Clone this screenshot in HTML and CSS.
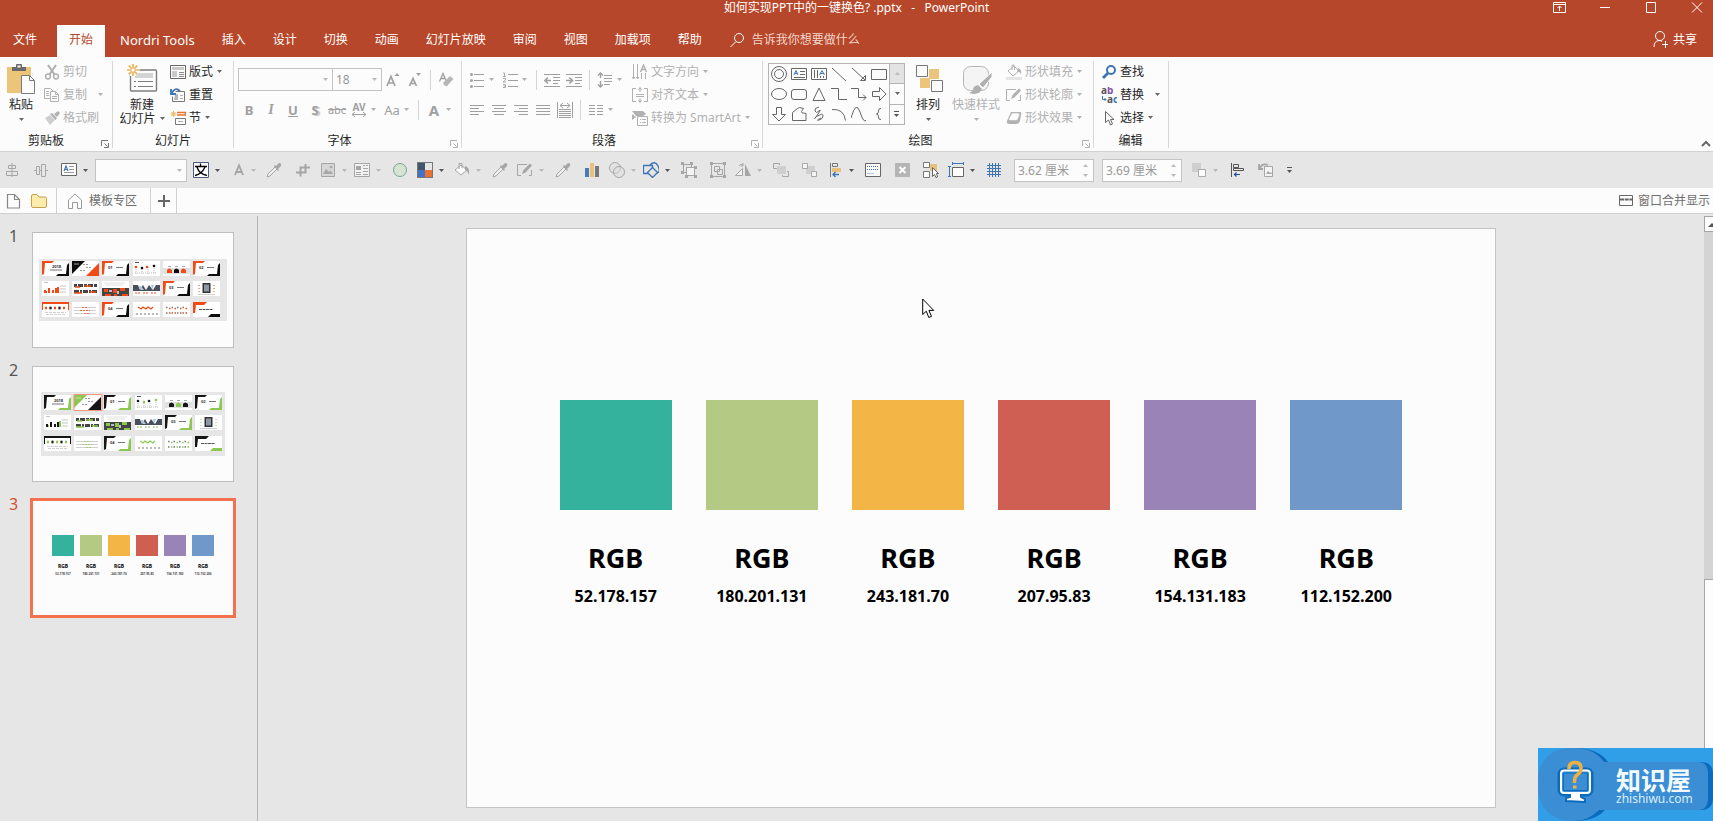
FILE: index.html
```html
<!DOCTYPE html>
<html lang="zh-CN">
<head>
<meta charset="utf-8">
<title>如何实现PPT中的一键换色？.pptx - PowerPoint</title>
<link rel="stylesheet" href="styles.css">
</head>
<body>
<svg class="sprite" aria-hidden="true">
  <symbol id="caret" viewBox="0 0 5 3"><path d="M0 0h5L2.500 3z" fill="currentColor"/></symbol>
  <symbol id="caret-up" viewBox="0 0 5 3"><path d="M0 3h5L2.500 0z" fill="currentColor"/></symbol>
  <symbol id="launch" viewBox="0 0 8 8"><path d="M.5 6V.5H7M3.500 3.500l3 3M7.500 3v4.500H3" fill="none" stroke="currentColor"/></symbol>

  <symbol id="paste" viewBox="0 0 30 32"><path d="M1 4h24v26H1z" fill="#ecc57b"/><path d="M6 8V4h4V2q0-1 1-1h4q1 0 1 1v2h4v4z" fill="#6a6a6a"/><path d="M11.500 2.500h3v2h-3z" fill="#fcfcfc"/><path d="M15.500 12.500h8l5 5v13h-13z" fill="#fcfcfc" stroke="#7a7a7a"/><path d="M23.500 12.500v5h5" fill="none" stroke="#7a7a7a"/></symbol>
  <symbol id="cut" viewBox="0 0 16 16"><g fill="none" stroke="currentColor"><path d="M4 1l6.500 9.500M12 1L5.500 10.500" stroke-width="2.200"/><circle cx="4" cy="12.500" r="2.400" stroke-width="1.500"/><circle cx="12" cy="12.500" r="2.400" stroke-width="1.500"/></g></symbol>
  <symbol id="copy" viewBox="0 0 16 16"><g fill="#fcfcfc" stroke="currentColor"><path d="M.5 1.500h6l3 3v7h-9z"/><path d="M6.500 4.500h5l3 3v7h-8z"/><path d="M11.500 4.500v3h3M2 4.500h3M2 6.500h3M2 8.500h3M8 9.500h5M8 11.500h5" fill="none"/></g></symbol>
  <symbol id="painter" viewBox="0 0 16 16"><path d="M1 8l5-3 5 5-5 5z" fill="currentColor" opacity=".6"/><path d="M6 4l2-1 5 5-1.500 2zM10 4l4-3 2 2-3 4z" fill="currentColor"/></symbol>
  <symbol id="newslide" viewBox="0 0 32 32"><rect x="4.500" y="7" width="26" height="21" rx="1" fill="#fcfcfc" stroke="#7d7d7d" stroke-width="1.400"/><path d="M9 10h18v5H9z" fill="#d4d4d4"/><path d="M8 18.500h2M12 18.500h15M8 23.500h2M12 23.500h15" stroke="#7d7d7d"/><circle cx="7" cy="7" r="6.500" fill="#fcfcfc"/><path d="M7 1v12M1 7h12M2.700 2.700l8.600 8.600M11.300 2.700l-8.600 8.600" stroke="#e9b55c" stroke-width="1.700"/><circle cx="7" cy="7" r="1.700" fill="#fcfcfc"/></symbol>
  <symbol id="layout" viewBox="0 0 16 16"><path d="M.5 1.500h15v13H.5z" fill="#fcfcfc" stroke="#666"/><path d="M2 3h12v3H2zM2 7h5v6H2z" fill="#c9c9c9"/><path d="M9 8.500h5M9 10.500h5M9 12.500h5" stroke="#8b8b8b"/></symbol>
  <symbol id="reset" viewBox="0 0 16 16"><path d="M5.500 4.500H14.500v10H2.500v-5" fill="#fcfcfc" stroke="#777"/><path d="M5 7h3v6H4zM10 8h3v1h-3zM10 11h3v1h-3z" fill="#b6b6b6"/><path d="M10 4Q5-.5 2 6M1 2v5h5" fill="none" stroke="#3e76b5" stroke-width="1.800"/></symbol>
  <symbol id="section" viewBox="0 0 16 16"><path d="M7 2.500h8.500V5H7" fill="none" stroke="#e6762e" stroke-width="1.500"/><path d="M5.500 8.500h10v6h-10z" fill="#fcfcfc" stroke="#777"/><path d="M8 11.500h5" stroke="#aaa"/><path d="M3.500 1v6M.5 4h6M1.500 2l4 4M5.500 2l-4 4" stroke="#e9b55c"/></symbol>

  <symbol id="grow" viewBox="0 0 16 16"><path d="M2 14L6 4.500 10 14M3.500 11h5" fill="none" stroke="currentColor" stroke-width="1.700"/><path d="M9.500 4L12 1l2.500 3z" fill="currentColor"/></symbol>
  <symbol id="shrink" viewBox="0 0 16 16"><path d="M2.500 14L6 6.500 9.500 14M4 11.500h4" fill="none" stroke="currentColor" stroke-width="1.700"/><path d="M9 1h5l-2.500 3z" fill="currentColor"/></symbol>
  <symbol id="eraser" viewBox="0 0 16 16"><path d="M1.500 9.500L5 1.500l3 7M3 6.500h4" fill="none" stroke="currentColor" stroke-width="1.300"/><path d="M5 11l7-7 3.500 3L9 14H7z" fill="currentColor" opacity=".75"/></symbol>
  <symbol id="spacing" viewBox="0 0 16 16"><path d="M1 12.500h14M4 10l-3 2.500L4 15M12 10l3 2.500-3 2.500" fill="none" stroke="currentColor"/><text x="8" y="9" text-anchor="middle" class="glyph">AV</text></symbol>
  <symbol id="bullets" viewBox="0 0 16 16"><path d="M5 2.500h10M5 8.500h10M5 14.500h10" stroke="currentColor" stroke-width="1.200"/><g fill="currentColor"><circle cx="2.500" cy="2.500" r="1.500"/><circle cx="2.500" cy="8.500" r="1.500"/><circle cx="2.500" cy="14.500" r="1.500"/></g></symbol>
  <symbol id="numbers" viewBox="0 0 16 16"><path d="M6 2.500h10M6 8.500h10M6 14.500h10" stroke="currentColor" stroke-width="1.200"/><path d="M1 1h1.500v3.500M1 4.500h3M1 6.500h2.500v1.500L1 10h3M1 12.500h2.500v3H1M1.500 14h2" fill="none" stroke="currentColor" stroke-width=".9"/></symbol>
  <symbol id="outdent" viewBox="0 0 16 16"><path d="M0 2.500h16M9 5.500h7M9 8.500h7M9 11.500h5M0 14.500h16" stroke="currentColor"/><path d="M7 8.500H1.500M4 5.500l-3 3 3 3" fill="none" stroke="currentColor" stroke-width="1.600"/></symbol>
  <symbol id="indent" viewBox="0 0 16 16"><path d="M0 2.500h16M9 5.500h7M9 8.500h7M9 11.500h5M0 14.500h16" stroke="currentColor"/><path d="M0 8.500h5.500M3.500 5.500l3 3-3 3" fill="none" stroke="currentColor" stroke-width="1.600"/></symbol>
  <symbol id="lines" viewBox="0 0 16 16"><path d="M7 3.500h8M7 6.500h8M7 9.500h8M7 12.500h6" stroke="currentColor"/><path d="M3.500 1v5M1 3.500L3.500 1 6 3.500M3.500 9v6M1 12.500L3.500 15 6 12.500" fill="none" stroke="currentColor" stroke-width="1.400"/></symbol>
  <symbol id="al" viewBox="0 0 16 16"><path d="M1 3.500h14M1 6.500h9M1 9.500h14M1 12.500h9" stroke="currentColor"/></symbol>
  <symbol id="ac" viewBox="0 0 16 16"><path d="M1 3.500h14M3 6.500h10M1 9.500h14M3 12.500h10" stroke="currentColor"/></symbol>
  <symbol id="ar" viewBox="0 0 16 16"><path d="M1 3.500h14M6 6.500h9M1 9.500h14M6 12.500h9" stroke="currentColor"/></symbol>
  <symbol id="aj" viewBox="0 0 16 16"><path d="M1 3.500h14M1 6.500h14M1 9.500h14M1 12.500h14" stroke="currentColor"/></symbol>
  <symbol id="ad" viewBox="0 0 16 16"><path d="M.5 0v16M15.500 0v16M2 7.500h12M2 9.500h12M2 11.500h12M2 13.500h12M2 15.500h12M3 3.500h10M6 1L3 3.500 6 6M10 1l3 2.500L10 6" fill="none" stroke="currentColor"/></symbol>
  <symbol id="cols" viewBox="0 0 16 16"><path d="M1 3.500h6M9 3.500h6M1 6.500h6M9 6.500h6M1 9.500h6M9 9.500h6M1 12.500h6M9 12.500h6" stroke="currentColor"/></symbol>
  <symbol id="textdir" viewBox="0 0 16 16"><path d="M1.500 0v15M5.500 0v15M9.500 9v6M13.500 9v6M0 13l1.500 2L3 13M4 13l1.500 2L7 13" fill="none" stroke="currentColor"/><path d="M8.500 8l3-7 3 7M9.500 5.500h4" fill="none" stroke="currentColor" stroke-width="1.500"/></symbol>
  <symbol id="textalign" viewBox="0 0 16 16"><path d="M4 1.500H.5v13H4M12 1.500h3.500v13H12M4 7.500h8M4 9.500h8M8 0v5M6 3l2-2 2 2M8 11v5M6 13l2 2 2-2" fill="none" stroke="currentColor"/></symbol>
  <symbol id="smartart" viewBox="0 0 16 16"><path d="M0 1h11l3 3-3 2H4z M0 4l4 3-4 3z" fill="currentColor"/><path d="M5.500 6.500h10v9h-10z" fill="#fcfcfc" stroke="currentColor"/><path d="M8 9.500h1M10 9.500h4M8 12.500h1M10 12.500h4" stroke="currentColor"/></symbol>

  <symbol id="arrange" viewBox="0 0 32 32"><path d="M17 6h10v10H17zM8 15h10v10H8z" fill="#ecc57b"/><path d="M4.500 2.500h11v11h-11zM19.500 17.500h11v11h-11z" fill="#fcfcfc" stroke="#777"/></symbol>
  <symbol id="styles" viewBox="0 0 32 32"><rect x="3.500" y="3.500" width="25" height="24" rx="7" fill="#f4f4f4" stroke="#b4b4b4"/><path d="M32 9L19 21l4 4 9-11z" fill="#b0b0b0" stroke="#fcfcfc"/><path d="M18 22q-5 1-5 5-2 3-4 3 10 3 13-4z" fill="#b0b0b0"/></symbol>
  <symbol id="fill" viewBox="0 0 16 16"><path d="M0 13h16v3H0z" fill="currentColor" opacity=".3"/><path d="M2 7l6-5 5 5-6 5zM6 6V1.500q2-2 2.500 1V6" fill="none" stroke="currentColor"/><path d="M12 4q4 1 3 7-1-4-4-3z" fill="currentColor"/></symbol>
  <symbol id="outline" viewBox="0 0 16 16"><path d="M10 2.500H.5v11H4M14.500 8v5.500H12" fill="none" stroke="currentColor"/><path d="M5 12l1.500-4L13 1.500 15 3.500 8.500 10.500z" fill="currentColor"/></symbol>
  <symbol id="effect" viewBox="0 0 16 16"><path d="M5 2h9q2 0 1 3l-1 6q-1 3-4 3H4q-4 0-3-3z" fill="currentColor"/><path d="M6 3h6q2 0 1.500 2l-1.500 4q-.5 1.500-2 1.500H4q-2 0-1-2z" fill="#fcfcfc" stroke="currentColor" stroke-width=".6"/></symbol>
  <symbol id="find" viewBox="0 0 16 16"><circle cx="10" cy="6" r="4" fill="none" stroke="#3e76b5" stroke-width="2"/><path d="M7 9l-5 5" stroke="#3e76b5" stroke-width="2.800"/></symbol>
  <symbol id="replace" viewBox="0 0 16 16"><text x="0" y="7" class="glyph dark">a<tspan fill="#8a4eac">b</tspan></text><text x="6" y="16" class="glyph dark">a<tspan fill="#3e76b5">c</tspan></text><path d="M1.500 9v3.500H5M3.500 11L5 12.500 3.500 14" fill="none" stroke="#3e76b5"/></symbol>
  <symbol id="pointer" viewBox="0 0 16 16"><path d="M4.500 1.500v11l3-2.500 2 5 2-1-2-4.500h3.500z" fill="#fcfcfc" stroke="#666"/></symbol>

  <symbol id="s-donut" viewBox="0 0 16 16"><circle cx="8" cy="8" r="7.500"/><circle cx="8" cy="8" r="4.500"/></symbol>
  <symbol id="s-text" viewBox="0 0 16 16"><path d="M.5 2.500h15v11H.5zM9 5.500h5M9 8.500h5M3 11.500h11"/><path d="M3 9l2-4.500L7 9M4 7.500h2" stroke="#3e76b5"/></symbol>
  <symbol id="s-vtext" viewBox="0 0 16 16"><path d="M.5 2.500h15v11H.5zM3.500 4v8M6.500 4v8M9.500 10v2M12.500 10v2"/><path d="M8.500 9L11 4.500 13.500 9M9.500 7.500h3" stroke="#3e76b5"/></symbol>
  <symbol id="s-line" viewBox="0 0 16 16"><path d="M1 2l14 13"/></symbol>
  <symbol id="s-arrow" viewBox="0 0 16 16"><path d="M1 2l13 12M14.500 9.500v5h-5z" /></symbol>
  <symbol id="s-rect" viewBox="0 0 16 16"><path d="M.5 3.500h15v10H.5z"/></symbol>
  <symbol id="s-oval" viewBox="0 0 16 16"><ellipse cx="8" cy="8" rx="7.500" ry="5.500"/></symbol>
  <symbol id="s-round" viewBox="0 0 16 16"><rect x=".5" y="3.500" width="15" height="10" rx="2.500"/></symbol>
  <symbol id="s-tri" viewBox="0 0 16 16"><path d="M8 2l6 12.500H2z"/></symbol>
  <symbol id="s-elbow" viewBox="0 0 16 16"><path d="M0 2.500h7.500v11H16"/></symbol>
  <symbol id="s-elbowa" viewBox="0 0 16 16"><path d="M0 2.500h7.500v9H15M12 8.500l3 3-3 3"/></symbol>
  <symbol id="s-right" viewBox="0 0 16 16"><path d="M1.500 5.500h7v-4l6.500 6.500-6.500 6.500v-4h-7z"/></symbol>
  <symbol id="s-down" viewBox="0 0 16 16"><path d="M5.500 1.500v7h-4L8 15l6.500-6.500h-4v-7z"/></symbol>
  <symbol id="s-free" viewBox="0 0 16 16"><path d="M1.500 14.500v-8l5-4 2-1 4 1-2 3q0 2 2 1.500l2.500.5v7z"/></symbol>
  <symbol id="s-scrib" viewBox="0 0 16 16"><path d="M8 1Q3 2 4 5t4 0-1 3-3 4 5-3q3-2 3 1t-4 4 2-2"/></symbol>
  <symbol id="s-arc" viewBox="0 0 16 16"><path d="M1 3.500q12-1 13.500 11"/></symbol>
  <symbol id="s-curve" viewBox="0 0 16 16"><path d="M0 12Q5-6 9 6t6 8"/></symbol>
  <symbol id="s-brace" viewBox="0 0 16 16"><path d="M10 2.500Q7.500 2 7.500 5T5.500 8q2 0 2 3T10 13.500"/></symbol>

  <symbol id="alignv" viewBox="0 0 16 16"><path d="M8 1v14M4.500 3.500h7v3h-7zM2.500 9.500h11v4h-11z" fill="#e6e6e6" stroke="currentColor"/></symbol>
  <symbol id="alignh" viewBox="0 0 16 16"><path d="M1 8.500h14" stroke="currentColor"/><path d="M3.500 4.500h3v8h-3zM8.500 2.500h4v12h-4z" fill="#e6e6e6" stroke="currentColor"/></symbol>
  <symbol id="textbox" viewBox="0 0 16 16"><path d="M.5 1.500h15v12H.5z" fill="#fcfcfc" stroke="#666"/><path d="M3 9l2-5 2 5M3.500 7.500h3" fill="none" stroke="#3e76b5" stroke-width="1.200"/><path d="M8 4.500h5M8 7.500h5M3 10.500h10" stroke="#999"/></symbol>
  <symbol id="wen" viewBox="0 0 16 16"><path d="M.5.5h15v15H.5z" fill="#fcfcfc" stroke="#4f5a7c"/><path d="M7.500 1.500v3M2 4.500h12M4 5q2 7 10 8.500M12 5Q9 12 2 13.500" fill="none" stroke="#000" stroke-width="1.300"/></symbol>
  <symbol id="fonta" viewBox="0 0 10 16"><path d="M1 13L5 3.500 9 13M2.500 10h5" fill="none" stroke="currentColor" stroke-width="1.900"/></symbol>
  <symbol id="dropper" viewBox="0 0 16 16"><path d="M1 15l1-3 7-7 2 2-7 7z" fill="#eee" stroke="currentColor"/><path d="M8 4l1-1 1 1 3-3q3 0 2 3l-3 3 1 1-1 1z" fill="currentColor"/></symbol>
  <symbol id="crop" viewBox="0 0 16 16"><path d="M1 10.500h9.500V2M5.500 14.500V5.500H15" fill="none" stroke="currentColor" stroke-width="2"/></symbol>
  <symbol id="image" viewBox="0 0 16 16"><path d="M1.500 1.500h13v13h-13z" fill="#d6d6d6" stroke="currentColor"/><path d="M3 12l3-5 3 3 1.500-1.500L13 12z" fill="currentColor"/><circle cx="11" cy="5" r="1.300" fill="currentColor"/></symbol>
  <symbol id="preview" viewBox="0 0 16 16"><path d="M.5 1.500h15v13H.5z" fill="#f2f2f2" stroke="currentColor"/><path d="M2 4h5v4H2z" fill="currentColor"/><path d="M9 3.500h2M12 3.500h2M9 6.500h5M9 9.500h5M2 10.500h5M2 12.500h5M9 12.500h5" stroke="currentColor"/></symbol>
  <symbol id="circle" viewBox="0 0 16 16"><circle cx="8" cy="8" r="6.500" fill="#d5e3d0" stroke="#78a596"/></symbol>
  <symbol id="palette" viewBox="0 0 16 16"><path d="M0 0h16v16H0z" fill="#777"/><path d="M1 1h7v7H1z" fill="#44546a"/><path d="M8 1h7v7H8z" fill="#e7e6e6"/><path d="M1 8h7v7H1z" fill="#4472c4"/><path d="M8 8h7v7H8z" fill="#ed7030"/></symbol>
  <symbol id="bucket" viewBox="0 0 16 16"><path d="M1 8l6-5 6 5-6 5z" fill="#fafafa" stroke="currentColor"/><path d="M5 7V1.500h3V6" fill="none" stroke="currentColor"/><path d="M11 4q5 1 4 9-1-4-4-5z" fill="currentColor"/></symbol>
  <symbol id="chart" viewBox="0 0 16 16"><path d="M1 6h4v9H1z" fill="#4a7bb5"/><path d="M6 1h4v14H6z" fill="#e9c17c"/><path d="M11 4h4v11h-4z" fill="#777"/></symbol>
  <symbol id="venn" viewBox="0 0 16 16"><g fill="#ddd" fill-opacity=".5" stroke="currentColor"><circle cx="6" cy="6" r="5.500"/><circle cx="10" cy="10" r="5.500"/></g></symbol>
  <symbol id="shapes" viewBox="0 0 16 16"><path d="M7 3q5-5 8 1t-1 7M.5 3.500h9v8h-9z" fill="none" stroke="#3e76b5" stroke-width="1.400"/><path d="M9.500 5.500l5 5-5 5-5-5z" fill="#e6e6e6" stroke="#3e76b5" stroke-width="1.400"/></symbol>
  <symbol id="grp" viewBox="0 0 16 16"><path d="M2.500 2.500h8v8h-8z" fill="none" stroke="currentColor"/><path d="M5.500 5.500h8v8h-8z" fill="#f4f4f4" stroke="currentColor"/><path d="M0 0h3v3H0zM9 0h3v3H9zM0 9h3v3H0zM4 13h3v3H4zM13 13h3v3h-3zM13 4h3v3h-3z" fill="currentColor"/></symbol>
  <symbol id="ungrp" viewBox="0 0 16 16"><path d="M1.500 1.500h13v13h-13zM4.500 4.500h5v5h-5zM7.500 7.500h5v5h-5z" fill="none" stroke="currentColor"/><path d="M0 0h3v3H0zM13 0h3v3h-3zM0 13h3v3H0zM13 13h3v3h-3z" fill="currentColor"/></symbol>
  <symbol id="flip" viewBox="0 0 16 16"><path d="M.5 13.500h7v-7z" fill="#f2f2f2" stroke="currentColor"/><path d="M10 14V2l6 12z" fill="currentColor"/><path d="M4 4q2-3 4-1M8 1v3H6" fill="none" stroke="currentColor"/></symbol>
  <symbol id="front" viewBox="0 0 16 16"><path d="M4 4h9v8H4z" fill="#cfcfcf"/><path d="M4 6.500H.5v-5h6V3M14 9.500h1.500v5h-6V13" fill="none" stroke="currentColor"/></symbol>
  <symbol id="back" viewBox="0 0 16 16"><path d="M4 4h9v8H4z" fill="#cfcfcf"/><path d="M.5 1.500h5v5h-5zM9.500 9.500h5v5h-5z" fill="#f4f4f4" stroke="currentColor"/></symbol>
  <symbol id="alleft" viewBox="0 0 16 16"><path d="M3.500 1v14" stroke="#777"/><path d="M5.500 1.500h5v3h-5z" fill="none" stroke="#777"/><path d="M5 6h9v4H5z" fill="#e9c17c"/><path d="M12 12.500H6M8.500 10L6 12.500 8.500 15" fill="none" stroke="#3e76b5" stroke-width="1.400"/></symbol>
  <symbol id="pane" viewBox="0 0 16 16"><path d="M.5 1.500h15v13H.5z" fill="#fcfcfc" stroke="#666"/><path d="M2 4.500h12M2 7.500h12" stroke="#3e76b5" stroke-dasharray="1 1"/><path d="M2 11.500h7" stroke="#b8c9de"/></symbol>
  <symbol id="xbox" viewBox="0 0 16 16"><rect x="1" y="1" width="15" height="14" rx="1" fill="#b5b5b5"/><path d="M5.500 5l6 6M11.500 5l-6 6" stroke="#fcfcfc" stroke-width="2"/></symbol>
  <symbol id="select" viewBox="0 0 16 16"><path d="M7 2h7v7H7z" fill="#e9c17c"/><path d="M.5.5h6v5h-6zM.5 9.500h6v6h-6z" fill="#fcfcfc" stroke="#777"/><path d="M9.500 5.500v9l2-2 1.500 3 1.500-.5-1-3.500h2z" fill="#fcfcfc" stroke="#666"/></symbol>
  <symbol id="size" viewBox="0 0 16 16"><path d="M4.500 5.500h11v9h-11z" fill="#fcfcfc" stroke="#666"/><path d="M4 1.500h12M4.500 0v3M15.500 0v3M1.500 5v10M0 4.500h3M0 14.500h3" stroke="#3e76b5"/></symbol>
  <symbol id="grid" viewBox="0 0 16 16"><path d="M3.500 1v14M6.500 1v14M9.500 1v14M12.500 1v14M1 3.500h14M1 6.500h14M1 9.500h14M1 12.500h14" stroke="#3e76b5"/></symbol>
  <symbol id="overlap" viewBox="0 0 16 16"><path d="M1 1h9v9H1z" fill="#cfcfcf"/><path d="M7.500 7.500h7v7h-7z" fill="#fcfcfc" stroke="#aaa"/></symbol>
  <symbol id="alobj" viewBox="0 0 16 16"><path d="M2.500 1v14M4.500 2.500h5v3h-5zM4.500 6.500h10v2h-10z" fill="none" stroke="#555"/><path d="M11 12.500H5M7.500 10.500l-2 2 2 2" fill="none" stroke="#1d4f9e" stroke-width="1.200"/></symbol>
  <symbol id="rotate" viewBox="0 0 16 16"><path d="M6.500 4.500h8v10h-8z" fill="#f4f4f4" stroke="currentColor"/><path d="M8 12l2-3 2 2 1-1 1 2z" fill="currentColor"/><path d="M2 6q2-5 8-3M1 2v5h4" fill="none" stroke="currentColor" stroke-width="1.800"/></symbol>
  <symbol id="more" viewBox="0 0 6 8"><path d="M0 1.500h5" stroke="#555"/><path d="M0 4h5L2.500 7z" fill="#555"/></symbol>

  <symbol id="m-corner" viewBox="0 0 27 15"><path d="M0 0h27v15H0z" fill="#fff"/><path d="M0 0h12l-2 2H3L2 13l-2 1z" fill="var(--p)"/><path d="M27 2v13H14l2-2h8l1-9z" fill="var(--q)"/></symbol>
  <symbol id="m-tri" viewBox="0 0 27 15"><path d="M0 0h27v15H0z" fill="#fff"/><path d="M0 0h13L0 13z" fill="var(--q)"/><path d="M27 2v13H14z" fill="var(--p)"/><path d="M11 3.500h5M14 6.500h5M8 9.500h6" stroke="#999" stroke-dasharray="2 1"/><path d="M2 3h5" stroke="#fff" stroke-width=".6"/></symbol>
  <symbol id="m-dots" viewBox="0 0 27 15"><path d="M0 0h27v15H0z" fill="#fff"/><path d="M2 1.500h4" stroke="#555"/><path d="M3 6v7M9 8v5M15 6v7M21 5v8M2 12h22" stroke="#bbb" stroke-dasharray="1 1"/><g fill="var(--p)"><circle cx="3" cy="6" r="1.300"/><circle cx="14" cy="6" r="1.300"/></g><g fill="var(--q)"><circle cx="9" cy="7" r="1.300"/><circle cx="21" cy="5" r="1.300"/></g></symbol>
  <symbol id="m-people" viewBox="0 0 27 15"><path d="M0 0h27v15H0z" fill="#fff"/><path d="M0 7h27v6H0z" fill="#e1e1e1"/><path d="M4 12V9q2-3 5 0v3zM18 12V9q2-3 5 0v3z" fill="var(--p)"/><path d="M11 12V9q2-3 5 0v3z" fill="var(--q)"/><path d="M5 5.500h3M12 5.500h3M19 5.500h3" stroke="#aaa"/></symbol>
  <symbol id="m-bars" viewBox="0 0 27 15"><path d="M0 0h27v15H0z" fill="#fff"/><path d="M2 1.500h4M18 5h6M18 8h6M18 11h6" stroke="#aaa" stroke-width=".7"/><path d="M2 12V9h2v3zM6 12V7h2v5zM10 12V9h2v3zM13 12V7h2v5z" fill="var(--p)"/><path d="M4 12v-2h1v2zM15 6h2v6h-2z" fill="var(--r)"/></symbol>
  <symbol id="m-strips" viewBox="0 0 27 15"><path d="M0 0h27v15H0z" fill="#fff"/><path d="M2 4.500h23" stroke="#444" stroke-width="3" stroke-dasharray="3 1 5 1"/><path d="M2 10.500h23" stroke="#444" stroke-width="3" stroke-dasharray="5 1 2 1"/><path d="M3 6h5M12 5h7M2 12h8M18 11h6" stroke="var(--r)" stroke-width="1.300"/></symbol>
  <symbol id="m-city" viewBox="0 0 27 15"><path d="M0 0h27v15H0z" fill="#fff"/><path d="M2 2h21M3 4h18" stroke="#ccc" stroke-width=".6"/><path d="M0 7h27v8H0z" fill="#444"/><path d="M2 8h4v3H2zM11 8h4v4h-4zM18 7h5v3h-5zM3 13h6v2H3zM12 13h3v2h-3zM20 13h6v2h-6z" fill="var(--r)"/><path d="M7 9h3v2H7zM15 10h2v3h-2z" fill="#b9bec4"/></symbol>
  <symbol id="m-photos" viewBox="0 0 27 15"><path d="M0 0h27v15H0z" fill="#fff"/><path d="M0 4h5l2 5 3-5 3 5 3-5 4 5 3-5h4v6H0z" fill="#48505a"/><path d="M5 5h3l3 4H8zM18 4h3l-2 5z" fill="#aac7df"/><path d="M2 12h5M10 12h5M18 12h6" stroke="var(--r)" stroke-dasharray="2 1"/></symbol>
  <symbol id="m-tablet" viewBox="0 0 27 15"><path d="M0 0h27v15H0z" fill="#fff"/><path d="M9.500 2h8v10h-8z" fill="#333"/><path d="M11 3.500h5v7h-5z" fill="#8a98a8"/><path d="M6 4v7M21 4v7" stroke="var(--r)" stroke-dasharray="1 2"/><path d="M5 13.500h17" stroke="#bbb" stroke-width=".7"/></symbol>
  <symbol id="m-banner" viewBox="0 0 27 15"><path d="M0 0h27v15H0z" fill="#fff"/><path d="M0 0h27v8h-1V2H1v6H0z" fill="var(--p)"/><path d="M3 6h21" stroke="var(--r)" stroke-width="2.600" stroke-dasharray="2 2.500"/><path d="M7.500 6h16" stroke="#222" stroke-width="2.600" stroke-dasharray="2 7"/><path d="M3 10.500h21M4 12.500h19" stroke="#bbb" stroke-width=".7" stroke-dasharray="3 1"/></symbol>
  <symbol id="m-list" viewBox="0 0 27 15"><path d="M0 0h27v15H0z" fill="#fff"/><path d="M2 5.500h22M2 8.500h22M2 11.500h22" stroke="#bbb" stroke-width=".7"/><path d="M10 5.500h6M8 8.500h10M12 11.500h5" stroke="var(--r)" stroke-width=".7" stroke-dasharray="2 1"/></symbol>
  <symbol id="m-zig" viewBox="0 0 27 15"><path d="M0 0h27v15H0z" fill="#fff"/><path d="M5 5l3 2 2-2 3 2 2-2 3 2 2-2" fill="none" stroke="var(--r)" stroke-width="1.200"/><path d="M3 12h22" stroke="#bbb" stroke-width="2" stroke-dasharray="2 2"/></symbol>
  <symbol id="m-rows" viewBox="0 0 27 15"><path d="M0 0h27v15H0z" fill="#fff"/><path d="M3 5.500h21M3 11h21" stroke="#777" stroke-width="1.500" stroke-dasharray="1.500 4"/><path d="M6 6.500h19M6 11h19" stroke="var(--r)" stroke-width="1.300" stroke-dasharray="1.500 4"/></symbol>
  <symbol id="m-end" viewBox="0 0 27 15"><path d="M0 0h27v15H0z" fill="#fff"/><path d="M0 0h14l-3 3H3l-1 8H0z" fill="var(--p)"/><path d="M27 12v3H15l3-3z" fill="var(--q)"/><path d="M6 7.500h14" stroke="#555" stroke-dasharray="3 .5"/></symbol>
  <symbol id="deck" viewBox="0 0 184 62">
    <g><use href="#m-corner" x="2" y="2" width="27" height="15"/><use href="#m-tri" x="32" y="2" width="27" height="15"/><use href="#m-corner" x="62" y="2" width="27" height="15"/><use href="#m-dots" x="93" y="2" width="27" height="15"/><use href="#m-people" x="123" y="2" width="27" height="15"/><use href="#m-corner" x="153" y="2" width="27" height="15"/></g>
    <g><use href="#m-bars" x="2" y="22" width="27" height="15"/><use href="#m-strips" x="32" y="22" width="27" height="15"/><use href="#m-city" x="62" y="22" width="27" height="15"/><use href="#m-photos" x="93" y="22" width="27" height="15"/><use href="#m-corner" x="123" y="22" width="27" height="15"/><use href="#m-tablet" x="153" y="22" width="27" height="15"/></g>
    <g><use href="#m-banner" x="2" y="43" width="27" height="15"/><use href="#m-list" x="32" y="43" width="27" height="15"/><use href="#m-corner" x="62" y="43" width="27" height="15"/><use href="#m-zig" x="93" y="43" width="27" height="15"/><use href="#m-rows" x="123" y="43" width="27" height="15"/><use href="#m-end" x="153" y="43" width="27" height="15"/></g>
    <g class="mini"><text x="12" y="9">2018</text><text x="68" y="10">01</text><text x="159" y="10">02</text><text x="129" y="30">03</text><text x="68" y="51">04</text></g>
    <path d="M76 8.500h7M167 8.500h7M137 28.500h7M76 49.500h7M10 11h12" stroke="#777"/>
  </symbol>
</svg>

<header class="titlebar">
  <h1>如何实现PPT中的一键换色? .pptx &nbsp;&nbsp;-&nbsp;&nbsp; PowerPoint</h1>
  <div class="window-controls">
    <button aria-label="功能区显示选项"><svg width="14" height="12" viewBox="0 0 14 12"><path d="M.5.500h12v10H.5zM.5 2.500h12M6.500 9V4M4.500 6l2-2 2 2"/></svg></button>
    <button aria-label="最小化"><svg width="12" height="12" viewBox="0 0 12 12"><path d="M1 5.500h10"/></svg></button>
    <button aria-label="最大化"><svg width="12" height="12" viewBox="0 0 12 12"><path d="M1.500.5h9v10h-9z"/></svg></button>
    <button aria-label="关闭"><svg width="12" height="12" viewBox="0 0 12 12"><path d="M1 .5l10 10M11 .5l-10 10"/></svg></button>
  </div>
</header>
<nav class="tabs">
  <button class="file">文件</button><button class="active">开始</button><button class="latin">Nordri Tools</button><button>插入</button><button>设计</button><button>切换</button><button>动画</button><button>幻灯片放映</button><button>审阅</button><button>视图</button><button>加载项</button><button>帮助</button>
  <button class="tell"><svg width="16" height="16" viewBox="0 0 16 16"><circle cx="10" cy="6" r="4.500"/><path d="M7 9.500L1.500 15"/></svg>告诉我你想要做什么</button>
  <button class="share"><svg width="16" height="17" viewBox="0 0 16 17"><circle cx="7" cy="5" r="4.500"/><path d="M1 16q0-6 5-6.500 2 0 3 1M9 13.500h6M12.500 10v7"/></svg>共享</button>
</nav>

<section class="ribbon">
  <div class="group g-clip">
    <div class="body">
      <button class="big"><svg width="30" height="32"><use href="#paste"/></svg><span>粘贴</span><svg class="caret"><use href="#caret"/></svg></button>
      <div class="stack">
        <button class="off"><svg class="i"><use href="#cut"/></svg>剪切</button>
        <button class="off"><svg class="i"><use href="#copy"/></svg>复制<svg class="caret far"><use href="#caret"/></svg></button>
        <button class="off"><svg class="i"><use href="#painter"/></svg>格式刷</button>
      </div>
    </div>
    <h2>剪贴板</h2><button class="launch on" aria-label="剪贴板选项"><svg width="8" height="8"><use href="#launch"/></svg></button>
  </div>
  <div class="group g-slides">
    <div class="body">
      <button class="big"><svg width="32" height="32"><use href="#newslide"/></svg><span>新建</span><span class="line">幻灯片<svg class="caret"><use href="#caret"/></svg></span></button>
      <div class="stack">
        <button><svg class="i"><use href="#layout"/></svg>版式<svg class="caret"><use href="#caret"/></svg></button>
        <button><svg class="i"><use href="#reset"/></svg>重置</button>
        <button><svg class="i"><use href="#section"/></svg>节<svg class="caret"><use href="#caret"/></svg></button>
      </div>
    </div>
    <h2>幻灯片</h2>
  </div>
  <div class="group g-font">
    <div class="tools">
      <div class="row">
        <div class="combo name"><input aria-label="字体"><svg class="caret"><use href="#caret"/></svg></div>
        <div class="combo points"><input aria-label="字号" value="18"><svg class="caret"><use href="#caret"/></svg></div>
        <button class="tool" aria-label="增大字号"><svg class="i"><use href="#grow"/></svg></button><button class="tool" aria-label="减小字号"><svg class="i"><use href="#shrink"/></svg></button><i class="sep"></i><button class="tool" aria-label="清除格式"><svg class="i"><use href="#eraser"/></svg></button>
      </div>
      <div class="row">
        <button class="tool"><b>B</b></button><button class="tool"><em>I</em></button><button class="tool"><u>U</u></button><button class="tool shadow"><b>S</b></button><button class="tool strike"><s>abc</s></button><button class="tool drop" aria-label="字符间距"><svg class="i"><use href="#spacing"/></svg><svg class="caret"><use href="#caret"/></svg></button><button class="tool drop"><span>Aa</span><svg class="caret"><use href="#caret"/></svg></button><i class="sep"></i><button class="tool drop"><b class="color">A</b><svg class="caret"><use href="#caret"/></svg></button>
      </div>
    </div>
    <h2>字体</h2><button class="launch" aria-label="字体选项"><svg width="8" height="8"><use href="#launch"/></svg></button>
  </div>
  <div class="group g-para">
    <div class="body">
      <div class="tools">
        <div class="row">
          <button class="tool drop" aria-label="项目符号"><svg class="i"><use href="#bullets"/></svg><svg class="caret"><use href="#caret"/></svg></button><button class="tool drop" aria-label="编号"><svg class="i"><use href="#numbers"/></svg><svg class="caret"><use href="#caret"/></svg></button><i class="sep"></i><button class="tool" aria-label="减少缩进"><svg class="i"><use href="#outdent"/></svg></button><button class="tool" aria-label="增加缩进"><svg class="i"><use href="#indent"/></svg></button><i class="sep"></i><button class="tool drop" aria-label="行距"><svg class="i"><use href="#lines"/></svg><svg class="caret"><use href="#caret"/></svg></button>
        </div>
        <div class="row">
          <button class="tool" aria-label="左对齐"><svg class="i"><use href="#al"/></svg></button><button class="tool" aria-label="居中"><svg class="i"><use href="#ac"/></svg></button><button class="tool" aria-label="右对齐"><svg class="i"><use href="#ar"/></svg></button><button class="tool" aria-label="两端对齐"><svg class="i"><use href="#aj"/></svg></button><button class="tool" aria-label="分散对齐"><svg class="i"><use href="#ad"/></svg></button><i class="sep"></i><button class="tool drop" aria-label="分栏"><svg class="i"><use href="#cols"/></svg><svg class="caret"><use href="#caret"/></svg></button>
        </div>
      </div>
      <div class="stack">
        <button class="off"><svg class="i"><use href="#textdir"/></svg>文字方向<svg class="caret"><use href="#caret"/></svg></button>
        <button class="off"><svg class="i"><use href="#textalign"/></svg>对齐文本<svg class="caret"><use href="#caret"/></svg></button>
        <button class="off"><svg class="i"><use href="#smartart"/></svg>转换为 SmartArt<svg class="caret"><use href="#caret"/></svg></button>
      </div>
    </div>
    <h2>段落</h2><button class="launch" aria-label="段落选项"><svg width="8" height="8"><use href="#launch"/></svg></button>
  </div>
  <div class="group g-draw">
    <div class="body">
      <div class="gallery">
        <div class="shapes">
          <button aria-label="圆环"><svg class="i"><use href="#s-donut"/></svg></button><button aria-label="文本框"><svg class="i"><use href="#s-text"/></svg></button><button aria-label="竖排文本框"><svg class="i"><use href="#s-vtext"/></svg></button><button aria-label="直线"><svg class="i"><use href="#s-line"/></svg></button><button aria-label="箭头"><svg class="i"><use href="#s-arrow"/></svg></button><button aria-label="矩形"><svg class="i"><use href="#s-rect"/></svg></button>
          <button aria-label="椭圆"><svg class="i"><use href="#s-oval"/></svg></button><button aria-label="圆角矩形"><svg class="i"><use href="#s-round"/></svg></button><button aria-label="三角形"><svg class="i"><use href="#s-tri"/></svg></button><button aria-label="肘形连接符"><svg class="i"><use href="#s-elbow"/></svg></button><button aria-label="肘形箭头"><svg class="i"><use href="#s-elbowa"/></svg></button><button aria-label="右箭头"><svg class="i"><use href="#s-right"/></svg></button>
          <button aria-label="下箭头"><svg class="i"><use href="#s-down"/></svg></button><button aria-label="任意多边形"><svg class="i"><use href="#s-free"/></svg></button><button aria-label="自由曲线"><svg class="i"><use href="#s-scrib"/></svg></button><button aria-label="弧形"><svg class="i"><use href="#s-arc"/></svg></button><button aria-label="曲线"><svg class="i"><use href="#s-curve"/></svg></button><button aria-label="左大括号"><svg class="i"><use href="#s-brace"/></svg></button>
        </div>
        <div class="scroller">
          <button disabled aria-label="上一行"><svg class="caret"><use href="#caret-up"/></svg></button><button aria-label="下一行"><svg class="caret"><use href="#caret"/></svg></button><button aria-label="其他"><svg width="6" height="8"><use href="#more"/></svg></button>
        </div>
      </div>
      <button class="big arrange"><svg width="32" height="32"><use href="#arrange"/></svg><span>排列</span><svg class="caret"><use href="#caret"/></svg></button>
      <button class="big off"><svg width="32" height="32"><use href="#styles"/></svg><span>快速样式</span><svg class="caret"><use href="#caret"/></svg></button>
      <div class="stack">
        <button class="off"><svg class="i"><use href="#fill"/></svg>形状填充<svg class="caret"><use href="#caret"/></svg></button>
        <button class="off"><svg class="i"><use href="#outline"/></svg>形状轮廓<svg class="caret"><use href="#caret"/></svg></button>
        <button class="off"><svg class="i"><use href="#effect"/></svg>形状效果<svg class="caret"><use href="#caret"/></svg></button>
      </div>
    </div>
    <h2>绘图</h2><button class="launch" aria-label="绘图选项"><svg width="8" height="8"><use href="#launch"/></svg></button>
  </div>
  <div class="group g-edit">
    <div class="stack">
      <button><svg class="i"><use href="#find"/></svg>查找</button>
      <button><svg class="i"><use href="#replace"/></svg>替换<svg class="caret far"><use href="#caret"/></svg></button>
      <button><svg class="i"><use href="#pointer"/></svg>选择<svg class="caret"><use href="#caret"/></svg></button>
    </div>
    <h2>编辑</h2>
  </div>
  <button class="collapse" aria-label="折叠功能区"><svg width="10" height="7" viewBox="0 0 10 7"><path d="M1 6l4-4 4 4" fill="none" stroke="#666" stroke-width="2"/></svg></button>
</section>

<section class="quick" aria-label="快速访问工具栏">
  <button class="q first" aria-label="水平居中"><svg class="i"><use href="#alignv"/></svg></button><button class="q" aria-label="垂直居中"><svg class="i"><use href="#alignh"/></svg></button>
  <button class="q split on spaced" aria-label="文本框"><svg class="i"><use href="#textbox"/></svg><svg class="caret"><use href="#caret"/></svg></button>
  <div class="combo theme"><input aria-label="主题字体"><svg class="caret"><use href="#caret"/></svg></div>
  <button class="q split on" aria-label="替换字体"><svg class="i"><use href="#wen"/></svg><svg class="caret"><use href="#caret"/></svg></button>
  <button class="q split letter" aria-label="字体颜色"><svg width="10" height="16"><use href="#fonta"/></svg><svg class="caret"><use href="#caret"/></svg></button>
  <button class="q" aria-label="文字取色"><svg class="i"><use href="#dropper"/></svg></button><button class="q" aria-label="裁剪"><svg class="i"><use href="#crop"/></svg></button>
  <button class="q split" aria-label="更改图片"><svg class="i"><use href="#image"/></svg><svg class="caret"><use href="#caret"/></svg></button><button class="q split" aria-label="图片版式"><svg class="i"><use href="#preview"/></svg><svg class="caret"><use href="#caret"/></svg></button>
  <button class="q" aria-label="椭圆"><svg class="i"><use href="#circle"/></svg></button><button class="q split on" aria-label="主题颜色"><svg class="i"><use href="#palette"/></svg><svg class="caret"><use href="#caret"/></svg></button>
  <button class="q split spaced" aria-label="形状填充"><svg class="i"><use href="#bucket"/></svg><svg class="caret"><use href="#caret"/></svg></button><button class="q" aria-label="填充取色"><svg class="i"><use href="#dropper"/></svg></button>
  <button class="q split" aria-label="形状轮廓"><svg class="i"><use href="#outline"/></svg><svg class="caret"><use href="#caret"/></svg></button><button class="q" aria-label="轮廓取色"><svg class="i"><use href="#dropper"/></svg></button>
  <button class="q" aria-label="图表"><svg class="i"><use href="#chart"/></svg></button><button class="q split" aria-label="合并形状"><svg class="i"><use href="#venn"/></svg><svg class="caret"><use href="#caret"/></svg></button><button class="q split on" aria-label="形状"><svg class="i"><use href="#shapes"/></svg><svg class="caret"><use href="#caret"/></svg></button>
  <button class="q" aria-label="组合"><svg class="i"><use href="#grp"/></svg></button><button class="q" aria-label="取消组合"><svg class="i"><use href="#ungrp"/></svg></button><button class="q split" aria-label="旋转"><svg class="i"><use href="#flip"/></svg><svg class="caret"><use href="#caret"/></svg></button>
  <button class="q" aria-label="置于顶层"><svg class="i"><use href="#front"/></svg></button><button class="q" aria-label="置于底层"><svg class="i"><use href="#back"/></svg></button><button class="q split on" aria-label="对齐"><svg class="i"><use href="#alleft"/></svg><svg class="caret"><use href="#caret"/></svg></button>
  <button class="q" aria-label="选择窗格"><svg class="i"><use href="#pane"/></svg></button><button class="q" aria-label="删除"><svg class="i"><use href="#xbox"/></svg></button><button class="q" aria-label="选择对象"><svg class="i"><use href="#select"/></svg></button><button class="q split on" aria-label="幻灯片大小"><svg class="i"><use href="#size"/></svg><svg class="caret"><use href="#caret"/></svg></button><button class="q" aria-label="网格线"><svg class="i"><use href="#grid"/></svg></button>
  <div class="spins">
    <div class="combo spin"><input aria-label="高度" value="3.62 厘米"><span class="steps"><svg class="caret"><use href="#caret-up"/></svg><svg class="caret"><use href="#caret"/></svg></span></div>
    <div class="combo spin"><input aria-label="宽度" value="3.69 厘米"><span class="steps"><svg class="caret"><use href="#caret-up"/></svg><svg class="caret"><use href="#caret"/></svg></span></div>
  </div>
  <button class="q split" aria-label="上移一层"><svg class="i"><use href="#overlap"/></svg><svg class="caret"><use href="#caret"/></svg></button><button class="q" aria-label="左对齐对象"><svg class="i"><use href="#alobj"/></svg></button><button class="q" aria-label="重设图片"><svg class="i"><use href="#rotate"/></svg></button><button class="q" aria-label="自定义"><svg width="6" height="8"><use href="#more"/></svg></button>
</section>

<nav class="docs">
  <div class="cell"><button aria-label="新建文档"><svg class="i" viewBox="0 0 16 16"><path d="M2.500 1.500h7l5 5v8.500h-12zM9.500 1.500v5h5" fill="none" stroke="#888" stroke-width="1.200"/></svg></button><button aria-label="打开"><svg class="i" viewBox="0 0 16 16"><path d="M.5 3q0-1.500 1.500-1.500h4l2 2.500h6q1.500 0 1.500 1.500v7.500q0 1.500-1.500 1.500H2Q.5 14.500.5 13z" fill="#fdecab" stroke="#c9a04a"/></svg></button></div>
  <a class="cell home" href="#"><svg class="i" viewBox="0 0 16 16"><path d="M1.500 15.500V7L8 1l6.500 6v8.500h-4v-6h-5v6z" fill="none" stroke="#999"/></svg>模板专区</a>
  <button class="cell plus" aria-label="新建标签"><svg width="12" height="12" viewBox="0 0 12 12"><path d="M6 0v12M0 6h12" stroke="#666" stroke-width="2"/></svg></button>
  <button class="merge"><svg width="14" height="12" viewBox="0 0 14 12"><path d="M.5.5h13v10H.5z" fill="none" stroke="#666"/><path d="M1 4.500h12" stroke="#666" stroke-width="2" stroke-dasharray="4 .7"/></svg>窗口合并显示</button>
</nav>

<main class="work">
  <ol class="panel">
    <li><span>1</span><div class="thumb orange"><svg viewBox="0 0 200 114"><path d="M6 26h188v62H6z" fill="#e6e6e6"/><use href="#deck" x="7" y="26" width="184" height="62"/></svg></div></li>
    <li><span>2</span><div class="thumb green"><svg viewBox="0 0 200 114"><path d="M8 25h184v64H8z" fill="#e6e6e6"/><use href="#deck" x="9" y="26" width="184" height="62"/><path d="M41 27.500h28v16H41z" fill="none" stroke="#f4977f"/></svg></div></li>
    <li class="current"><span>3</span><div class="thumb"><svg viewBox="0 0 200 114">
      <path d="M19 34h22v21H19z" fill="#34b29d"/><path d="M47 34h22v21H47z" fill="#b4c983"/><path d="M75 34h22v21H75z" fill="#f3b546"/><path d="M103 34h22v21h-22z" fill="#cf5f53"/><path d="M131 34h22v21h-22z" fill="#9a83b7"/><path d="M159 34h22v21h-22z" fill="#7098c8"/>
      <g class="tiny-head"><text x="30" y="67">RGB</text><text x="58" y="67">RGB</text><text x="86" y="67">RGB</text><text x="114" y="67">RGB</text><text x="142" y="67">RGB</text><text x="170" y="67">RGB</text></g>
      <g class="tiny"><text x="30" y="74">52.178.157</text><text x="58" y="74">180.201.131</text><text x="86" y="74">243.181.70</text><text x="114" y="74">207.95.83</text><text x="142" y="74">154.131.183</text><text x="170" y="74">112.152.200</text></g></svg></div></li>
  </ol>
  <div class="stage">
    <article class="slide">
      <div class="swatches">
        <figure><i class="teal"></i><h3>RGB</h3><p>52.178.157</p></figure>
        <figure><i class="lime"></i><h3>RGB</h3><p>180.201.131</p></figure>
        <figure><i class="amber"></i><h3>RGB</h3><p>243.181.70</p></figure>
        <figure><i class="red"></i><h3>RGB</h3><p>207.95.83</p></figure>
        <figure><i class="violet"></i><h3>RGB</h3><p>154.131.183</p></figure>
        <figure><i class="blue"></i><h3>RGB</h3><p>112.152.200</p></figure>
      </div>
      <svg class="cursor" width="13" height="21" viewBox="0 0 13 21"><path d="M.7 1v15.500l3.600-3.300 2.500 6.300 2.700-1.100-2.600-6h4.800z" fill="#fff" stroke="#000"/></svg>
    </article>
  </div>
  <div class="scrollbar"><button aria-label="向上滚动"><svg width="9" height="5" viewBox="0 0 9 5"><path d="M3 5l4-4 4 4z" fill="#555"/></svg></button><div class="track"></div><div class="thumbbar"></div></div>
</main>

<aside class="badge">
  <svg class="shape" width="175" height="73" viewBox="0 0 175 73"><path d="M37 0Q60 0 70 14h93q12 0 12 12v24q0 12-12 12H67Q57 73 37 73z" fill="#0b6bbd"/><path d="M37 0q19 0 29 14h94q10 0 10 12v24q0 12-10 12H61Q50 73 37 73 0 73 0 36T37 0z" fill="#3b8ed3"/><rect x="22" y="22" width="31" height="24" rx="4" fill="#3b8ed3" stroke="#0b6bbd" stroke-width="5"/><path d="M28 53v-3l4-1v-4h11v4l4 2v3z" fill="#fff" stroke="#0b6bbd" stroke-width="2"/><rect x="23" y="22.500" width="29" height="22.500" rx="3" fill="#3b8ed3" stroke="#fff" stroke-width="2"/><path d="M25.500 25h24v17.500h-24z" fill="none" stroke="#0b6bbd"/><path d="M31 21q0-6.500 6-6.500t6 6q0 4-3.500 6-3 2-3 6.500v2" fill="none" stroke="#f0b040" stroke-width="3.500"/><path d="M35 37.500h3.500v3H35z" fill="#f0b040"/></svg>
  <p class="brand">知识屋</p><p class="site">zhishiwu.com</p>
</aside>
</body>
</html>
```

FILE: styles.css
```css
* { box-sizing: border-box; margin: 0; padding: 0; }
body {
  display: flex; flex-direction: column; height: 100vh; overflow: hidden;
  background: #e6e6e6; color: #262626;
  font: 12px/16px "Noto Sans", "Noto Sans CJK SC", sans-serif;
}
button, input { font: inherit; color: inherit; border: 0; background: none; min-width: 0; }
button { white-space: nowrap; }
svg { display: block; flex: none; overflow: visible; }
.sprite { display: none; }
.i { width: 16px; height: 16px; }
.caret { width: 5px; height: 3px; color: #666; }
.glyph { font: bold 10px "Noto Sans", sans-serif; fill: currentColor; }
.glyph.dark { fill: #555; }

.titlebar { position: relative; flex: none; height: 25px; background: #b7472a; color: #fff; }
.titlebar h1 { font-size: 12px; font-weight: normal; line-height: 16px; text-align: center; }
.window-controls { position: absolute; top: 0; right: 3px; display: flex; gap: 22px; }
.window-controls button { width: 24px; height: 14px; padding: 2px 5px 0; }
.window-controls path { fill: none; stroke: #fff; }

.tabs { display: flex; flex: none; gap: 3px; height: 32px; padding-left: 1px; background: #b7472a; color: #fff; }
.tabs button { padding: 0 12px 2px; }
.tabs .file { margin-right: 5px; }
.tabs .latin { font-size: 13px; }
.tabs .active { background: #fcfcfc; color: #b7472a; }
.tabs svg { fill: none; stroke: #fff; }
.tabs .tell { display: flex; align-items: center; gap: 7px; color: #f3d5cc; }
.tabs .share { display: flex; align-items: center; gap: 4px; margin-left: auto; padding: 0 16px 3px 0; }

.ribbon { position: relative; display: flex; flex: none; height: 95px; padding: 4px 0 3px; border-bottom: 1px solid #d2d2d2; background: #fcfcfc; }
.group { position: relative; display: flex; flex-direction: column; flex: none; border-right: 1px solid #d8d8d8; }
.group h2 { margin-top: auto; font-size: 12px; font-weight: normal; line-height: 14px; text-align: center; }
.g-clip { width: 113px; padding-left: 6px; }
.g-clip h2 { padding-right: 26px; }
.g-slides { width: 121px; }
.g-font { width: 228px; padding-left: 4px; }
.g-para { width: 301px; padding-left: 4px; }
.g-font h2, .g-para h2, .g-draw h2 { padding-right: 20px; }
.g-draw { width: 331px; padding-left: 5px; }
.g-edit { width: 75px; padding-left: 7px; }
.g-edit h2 { padding-right: 8px; }
.body { display: flex; }
.stack button { display: flex; align-items: center; gap: 3px; height: 23px; padding-bottom: 2px; }
.stack .caret { margin-left: 1px; }
.stack .caret.far { margin-left: 8px; }
.off { color: #b1b1b1; }
.off .caret { color: #b1b1b1; }
.big { display: flex; flex-direction: column; align-items: center; padding-top: 2px; }
.big span { margin-top: 2px; line-height: 16px; }
.big > .caret { margin-top: 5px; }
.big .line { display: flex; align-items: center; gap: 4px; margin-top: -2px; line-height: 15px; }
.g-clip .big { margin-right: 8px; }
.g-slides .big { width: 50px; }
.g-slides .body { padding-left: 4px; gap: 3px; }
.arrange { margin: 0 8px 0 7px; }
.g-draw .stack { padding-left: 6px; }
.g-para .stack { padding-left: 5px; }
.launch { position: absolute; right: 3px; bottom: 0; color: #b1b1b1; }
.launch.on { color: #777; }

.tools { padding-top: 7px; color: #a0a0a0; }
.row { display: flex; align-items: center; height: 23px; margin-bottom: 7px; }
.row .caret { color: #b1b1b1; }
.tool { display: flex; align-items: center; justify-content: center; width: 22px; height: 23px; font-size: 13px; }
.tool.drop { width: 33px; justify-content: flex-start; gap: 4px; padding-left: 3px; }
.tool.drop > :first-child { width: 16px; text-align: center; }
.tool em { font-family: "Liberation Serif", serif; font-weight: bold; font-size: 14px; }
.tool u { font-weight: bold; }
.shadow b { text-shadow: 2px 1px 1px #c4c4c4; }
.strike { font-size: 11px; }
.tool .color { font-size: 15px; }
.sep { width: 1px; height: 20px; margin: 0 4px; background: #d4d4d4; }
.combo { display: flex; align-items: center; flex: none; height: 23px; padding-right: 4px; border: 1px solid #c3c3c3; background: #fcfcfc; color: #999; }
.combo input { flex: 1; width: 20px; padding-left: 3px; height: 20px; }
.combo .caret { color: #b9b9b9; }
.combo.name { width: 95px; margin-right: -1px; }
.combo.points { width: 50px; }

.gallery { display: flex; width: 137px; height: 62px; margin-top: 2px; border: 1px solid #b4b4b4; }
.shapes { display: grid; grid-template-columns: repeat(6, 20px); grid-auto-rows: 20px; flex: 1; overflow: hidden; fill: none; stroke: #666; }
.shapes button { display: grid; place-items: center; }
.scroller { display: flex; flex-direction: column; width: 15px; border-left: 1px solid #b4b4b4; }
.scroller button { display: grid; place-items: center; flex: 1; }
.scroller button + button { border-top: 1px solid #b4b4b4; }
.scroller button:disabled { background: #e3e3e3; }
.scroller button:disabled .caret { color: #bbb; }
.collapse { position: absolute; right: 2px; bottom: 4px; }

.quick { display: flex; align-items: center; flex: none; height: 36px; color: #a6a6a6; }
.q { display: flex; align-items: center; flex: none; width: 29px; height: 24px; padding-left: 7px; }
.q .caret { color: #b9b9b9; }
.q.on .caret { color: #555; }
.q.first { width: 26px; padding-left: 4px; }
.q.split { width: 34px; padding-left: 3px; gap: 6px; }
.q.split.letter { width: 35px; padding-left: 10px; gap: 7px; }
.q.spaced { margin-left: 3px; }
.combo.theme { width: 92px; margin: 0 3px; }
.spins { display: flex; gap: 8px; margin: 0 6px; }
.combo.spin { width: 80px; padding-right: 5px; }
.steps { display: flex; flex-direction: column; gap: 7px; }

.docs { display: flex; flex: none; height: 26px; border-bottom: 1px solid #d0d0d0; background: #fcfcfc; color: #6f6f6f; }
.cell { display: flex; align-items: center; gap: 10px; padding: 0 9px 0 5px; border-right: 1px solid #d0d0d0; }
.home { gap: 6px; padding: 0 13px 0 10px; color: inherit; text-decoration: none; }
.plus { padding: 0 6px 0 7px; }
.merge { display: flex; align-items: center; gap: 5px; margin-left: auto; padding-right: 3px; }

.work { display: flex; flex: 1; min-height: 0; }
.panel { width: 258px; margin-top: 2px; padding: 16px 0 0 9px; border-right: 1px solid #b4b4b4; list-style: none; }
.panel li { display: flex; gap: 14px; height: 134px; }
.panel li > span { width: 9px; font-size: 16px; line-height: 9px; color: #555; }
.thumb { width: 202px; height: 116px; border: 1px solid #bfbfbf; background: #fcfcfc; }
.thumb svg { width: 100%; }
.orange { --p: #f04b16; --q: #0c0c0c; --r: #f04b16; }
.green { --p: #161616; --q: #8cc751; --r: #8cc751; }
.mini { font: bold 4px "Noto Sans", sans-serif; fill: #333; }
.panel .current > span { color: #d35230; }
.current .thumb { border-color: #fcfcfc; outline: 3px solid #f3714f; outline-offset: -1px; }
.tiny-head { font: bold 5px "Noto Sans", sans-serif; text-anchor: middle; }
.tiny { font: bold 3px "Noto Sans", sans-serif; text-anchor: middle; fill: #444; }

.stage { display: flex; justify-content: center; flex: 1; min-width: 0; padding: 14px 0 13px; }
.slide { position: relative; height: 100%; aspect-ratio: 71 / 40; border: 1px solid #c4c4c4; background: #fcfcfc; }
.swatches { display: flex; justify-content: space-between; width: 82%; margin: 171px auto 0; }
.swatches figure { width: 112px; text-align: center; color: #000; }
.swatches i { display: block; height: 110px; }
.swatches h3 { margin-top: 30px; font-size: 27px; line-height: 36px; }
.swatches p { margin-top: 8px; font-size: 16px; font-weight: bold; line-height: 24px; }
.teal { background: #34b29d; }
.lime { background: #b4c983; }
.amber { background: #f3b546; }
.red { background: #cf5f53; }
.violet { background: #9a83b7; }
.blue { background: #7098c8; }
.cursor { position: absolute; left: 455px; top: 69px; }

.scrollbar { display: flex; flex-direction: column; flex: none; width: 9px; overflow: hidden; padding-top: 2px; }
.scrollbar button { height: 16px; border: 1px solid #a5a5a5; border-right: 0; background: #fcfcfc; }
.track { flex: 348; background: #d4d4d4; }
.thumbbar { flex: 241; border: 1px solid #a5a5a5; border-right: 0; background: #fcfcfc; }

.badge { position: absolute; right: 0; bottom: 0; width: 175px; height: 73px; padding: 16px 0 0 78px; background: #309fe8; color: #f2faff; }
.badge .shape { position: absolute; left: 0; top: 0; }
.badge p { position: relative; }
.brand { font: bold 25px/30px "Noto Sans CJK SC", sans-serif; }
.site { font-size: 12px; line-height: 10px; color: #d8efff; }
```
